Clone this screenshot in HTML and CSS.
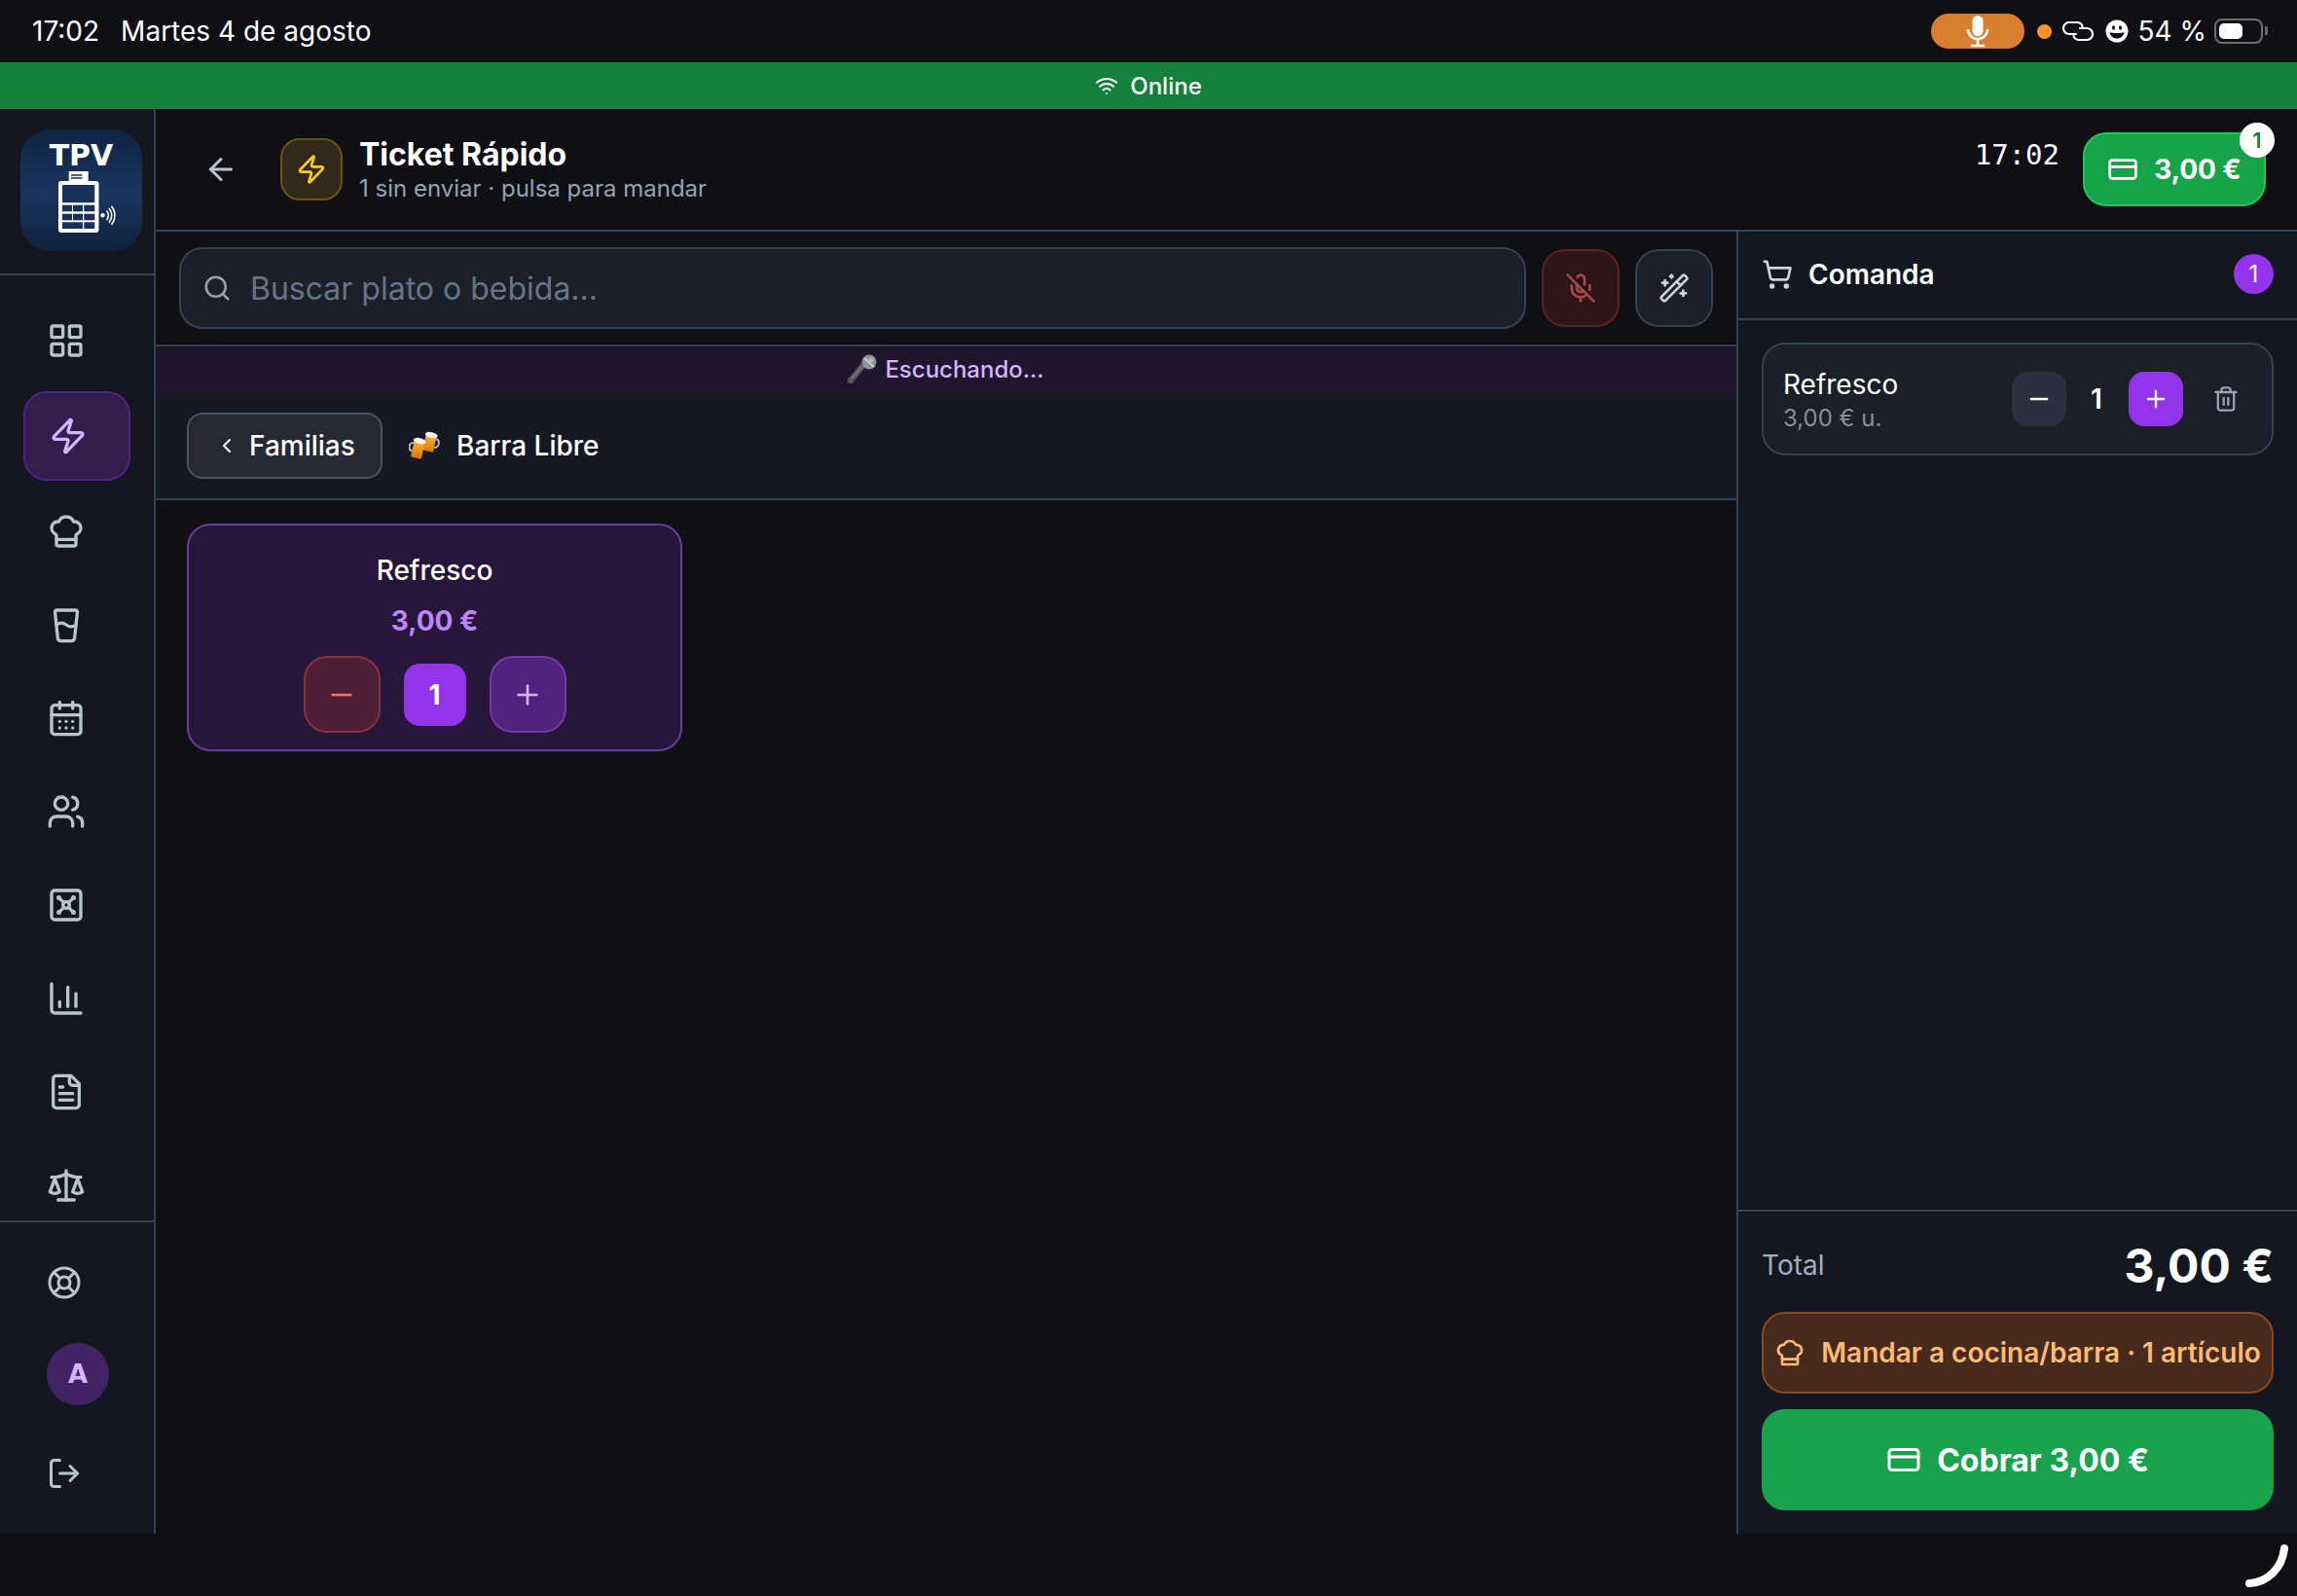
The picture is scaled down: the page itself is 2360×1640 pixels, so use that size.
FILE: index.html
```html
<!DOCTYPE html>
<html lang="es">
<head>
    <meta charset="UTF-8">
    <title>Ticket Rápido</title>
    <link rel="stylesheet" href="styles.css">
</head>
<body>

    <!-- icon sprite -->
    <svg class="sprite" xmlns="http://www.w3.org/2000/svg">
        <symbol id="i-grid" viewBox="0 0 24 24"><rect x="3" y="3" width="7" height="7" rx="1"/><rect x="14" y="3" width="7" height="7" rx="1"/><rect x="14" y="14" width="7" height="7" rx="1"/><rect x="3" y="14" width="7" height="7" rx="1"/></symbol>
        <symbol id="i-zap" viewBox="0 0 24 24"><path d="M4 14a1 1 0 0 1-.78-1.63l9.9-10.2a.5.5 0 0 1 .86.46l-1.92 6.02A1 1 0 0 0 13 10h7a1 1 0 0 1 .78 1.63l-9.9 10.2a.5.5 0 0 1-.86-.46l1.92-6.02A1 1 0 0 0 11 14z"/></symbol>
        <symbol id="i-chef" viewBox="0 0 24 24"><path d="M17 21a1 1 0 0 0 1-1v-5.35c0-.457.316-.844.727-1.041a4 4 0 0 0-2.134-7.589 5 5 0 0 0-9.186 0 4 4 0 0 0-2.134 7.588c.411.198.727.585.727 1.041V20a1 1 0 0 0 1 1Z"/><path d="M6 17h12"/></symbol>
        <symbol id="i-glass" viewBox="0 0 24 24"><path d="M5.116 4.104A1 1 0 0 1 6.11 3h11.78a1 1 0 0 1 .994 1.105L17.19 20.21A2 2 0 0 1 15.2 22H8.8a2 2 0 0 1-2-1.79z"/><path d="M6 12a5 5 0 0 1 6 0 5 5 0 0 0 6 0"/></symbol>
        <symbol id="i-calendar" viewBox="0 0 24 24"><path d="M8 2v4"/><path d="M16 2v4"/><rect x="3" y="4" width="18" height="18" rx="2"/><path d="M3 10h18"/><path d="M8 14h.01"/><path d="M12 14h.01"/><path d="M16 14h.01"/><path d="M8 18h.01"/><path d="M12 18h.01"/><path d="M16 18h.01"/></symbol>
        <symbol id="i-users" viewBox="0 0 24 24"><path d="M16 21v-2a4 4 0 0 0-4-4H6a4 4 0 0 0-4 4v2"/><circle cx="9" cy="7" r="4"/><path d="M22 21v-2a4 4 0 0 0-3-3.87"/><path d="M16 3.13a4 4 0 0 1 0 7.75"/></symbol>
        <symbol id="i-vault" viewBox="0 0 24 24"><rect x="3" y="3" width="18" height="18" rx="2"/><circle cx="7.5" cy="7.5" r=".5"/><path d="m7.9 7.9 2.7 2.7"/><circle cx="16.5" cy="7.5" r=".5"/><path d="m13.4 10.6 2.7-2.7"/><circle cx="7.5" cy="16.5" r=".5"/><path d="m7.9 16.1 2.7-2.7"/><circle cx="16.5" cy="16.5" r=".5"/><path d="m13.4 13.4 2.7 2.7"/><circle cx="12" cy="12" r="2"/></symbol>
        <symbol id="i-chart" viewBox="0 0 24 24"><path d="M3 3v16a2 2 0 0 0 2 2h16"/><path d="M18 17V9"/><path d="M13 17V5"/><path d="M8 17v-3"/></symbol>
        <symbol id="i-file" viewBox="0 0 24 24"><path d="M15 2H6a2 2 0 0 0-2 2v16a2 2 0 0 0 2 2h12a2 2 0 0 0 2-2V7Z"/><path d="M14 2v4a2 2 0 0 0 2 2h4"/><path d="M10 9H8"/><path d="M16 13H8"/><path d="M16 17H8"/></symbol>
        <symbol id="i-scale" viewBox="0 0 24 24"><path d="m16 16 3-8 3 8c-.87.65-1.92 1-3 1s-2.13-.35-3-1Z"/><path d="m2 16 3-8 3 8c-.87.65-1.92 1-3 1s-2.13-.35-3-1Z"/><path d="M7 21h10"/><path d="M12 3v18"/><path d="M3 7h2c2 0 5-1 7-2 2 1 5 2 7 2h2"/></symbol>
        <symbol id="i-buoy" viewBox="0 0 24 24"><circle cx="12" cy="12" r="10"/><path d="m4.93 4.93 4.24 4.24"/><path d="m14.83 9.17 4.24-4.24"/><path d="m14.83 14.83 4.24 4.24"/><path d="m9.17 14.83-4.24 4.24"/><circle cx="12" cy="12" r="4"/></symbol>
        <symbol id="i-logout" viewBox="0 0 24 24"><path d="M9 21H5a2 2 0 0 1-2-2V5a2 2 0 0 1 2-2h4"/><path d="m16 17 5-5-5-5"/><path d="M21 12H9"/></symbol>
        <symbol id="i-back" viewBox="0 0 24 24"><path d="m12 19-7-7 7-7"/><path d="M19 12H5"/></symbol>
        <symbol id="i-card" viewBox="0 0 24 24"><rect x="2" y="5" width="20" height="14" rx="2"/><path d="M2 10h20"/></symbol>
        <symbol id="i-search" viewBox="0 0 24 24"><path d="m21 21-4.34-4.34"/><circle cx="11" cy="11" r="8"/></symbol>
        <symbol id="i-micoff" viewBox="0 0 24 24"><path d="M12 19v3"/><path d="M15 9.34V5a3 3 0 0 0-5.68-1.33"/><path d="M16.95 16.95A7 7 0 0 1 5 12v-2"/><path d="M18.89 13.23A7 7 0 0 0 19 12v-2"/><path d="m2 2 20 20"/><path d="M9 9v3a3 3 0 0 0 5.12 2.12"/></symbol>
        <symbol id="i-wand" viewBox="0 0 24 24"><path d="m21.64 3.64-1.28-1.28a1.21 1.21 0 0 0-1.72 0L2.36 18.64a1.21 1.21 0 0 0 0 1.72l1.28 1.28a1.2 1.2 0 0 0 1.72 0L21.64 5.36a1.2 1.2 0 0 0 0-1.72"/><path d="m14 7 3 3"/><path d="M5 6v4"/><path d="M19 14v4"/><path d="M10 2v2"/><path d="M7 8H3"/><path d="M21 16h-4"/><path d="M11 3H9"/></symbol>
        <symbol id="i-cart" viewBox="0 0 24 24"><circle cx="8" cy="21" r="1"/><circle cx="19" cy="21" r="1"/><path d="M2.05 2.05h2l2.66 12.42a2 2 0 0 0 2 1.58h9.78a2 2 0 0 0 1.95-1.57l1.65-7.43H5.12"/></symbol>
        <symbol id="i-trash" viewBox="0 0 24 24"><path d="M3 6h18"/><path d="M19 6v14c0 1-1 2-2 2H7c-1 0-2-1-2-2V6"/><path d="M8 6V4c0-1 1-2 2-2h4c1 0 2 1 2 2v2"/><path d="M10 11v6"/><path d="M14 11v6"/></symbol>
        <symbol id="i-minus" viewBox="0 0 24 24"><path d="M5 12h14"/></symbol>
        <symbol id="i-plus" viewBox="0 0 24 24"><path d="M5 12h14"/><path d="M12 5v14"/></symbol>
        <symbol id="i-chevron" viewBox="0 0 24 24"><path d="m15 18-6-6 6-6"/></symbol>
        <symbol id="i-wifi" viewBox="0 0 24 24"><path d="M12 20h.01"/><path d="M2 8.82a15 15 0 0 1 20 0"/><path d="M5 12.859a10 10 0 0 1 14 0"/><path d="M8.5 16.429a5 5 0 0 1 7 0"/></symbol>
    </svg>

    <div class="statusbar">
        <div class="status-left">
            <span>17:02</span>
            <span>Martes 4 de agosto</span>
        </div>
        <div class="status-right">
            <div class="mic-pill">
                <svg width="24" height="34" viewBox="0 0 24 34">
                    <rect x="6.5" y="1" width="11" height="21" rx="5.5" fill="#fff"/>
                    <path d="M2 15a10 10 0 0 0 20 0M12 25v6M5 32h14" fill="none" stroke="#fff" stroke-width="2.6"/>
                </svg>
            </div>
            <span class="status-dot"></span>
            <svg class="status-link" width="32" height="20" viewBox="0 0 32 20" fill="none" stroke="#fff" stroke-width="2.2" stroke-linecap="round">
                <path d="M14 13H7A6 6 0 0 1 7 1h8a6 6 0 0 1 5.500 4"/>
                <path d="M18 7h7a6 6 0 0 1 0 12h-8a6 6 0 0 1-5.500-4"/>
            </svg>
            <svg class="status-smile" width="24" height="24" viewBox="0 0 24 24">
                <circle cx="12" cy="12" r="11.500" fill="#fff"/>
                <ellipse cx="8.500" cy="8.500" rx="1.500" ry="2.200" fill="#0f0f14"/>
                <ellipse cx="15.500" cy="8.500" rx="1.500" ry="2.200" fill="#0f0f14"/>
                <path d="M4.500 13c2 1.300 13 1.300 15 0-.6 4-3.500 6.500-7.500 6.500s-6.900-2.500-7.500-6.500z" fill="#0f0f14"/>
            </svg>
            <span>54 %</span>
            <div class="battery"><div class="battery-level"></div></div>
        </div>
    </div>

    <div class="online-bar">
        <svg class="icon online-icon"><use href="#i-wifi"/></svg>
        <span>Online</span>
    </div>

    <div class="app">
        <aside class="sidebar">
            <div class="sidebar-logo">
                <div class="logo">
                    <span class="logo-text">TPV</span>
                    <svg width="60" height="66" viewBox="0 0 60 66">
                        <rect x="11.700" y="1" width="20" height="13" fill="#fff"/>
                        <path d="M14 5h11.500M14 8h11.500" stroke="#19305a" stroke-width="1.600"/>
                        <rect x="1" y="11" width="41.500" height="53" rx="3" fill="#fff"/>
                        <g fill="#19305a">
                            <rect x="5" y="15" width="33.300" height="18.300" rx="1"/>
                            <rect x="5" y="35.700" width="10" height="6.600"/>
                            <rect x="16" y="35.700" width="10" height="6.600"/>
                            <rect x="27.300" y="35.700" width="11" height="6.600"/>
                            <rect x="5" y="44.700" width="10" height="6.600"/>
                            <rect x="16" y="44.700" width="10" height="6.600"/>
                            <rect x="27.300" y="44.700" width="11" height="6.600"/>
                            <rect x="5" y="53.300" width="21" height="6.700"/>
                            <rect x="27.300" y="53.300" width="11" height="6.700"/>
                        </g>
                        <circle cx="46.500" cy="46.300" r="2.200" fill="#fff"/>
                        <path d="M50.500 41.500a7 7 0 0 1 0 9.600M53 39a11 11 0 0 1 0 14.600M55.500 36.800a15 15 0 0 1 0 19" fill="none" stroke="#fff" stroke-width="1.600"/>
                    </svg>
                </div>
            </div>
            <nav class="sidebar-nav">
                <a class="nav-item"><svg class="icon"><use href="#i-grid"/></svg></a>
                <a class="nav-item active"><svg class="icon"><use href="#i-zap"/></svg></a>
                <a class="nav-item"><svg class="icon"><use href="#i-chef"/></svg></a>
                <a class="nav-item"><svg class="icon"><use href="#i-glass"/></svg></a>
                <a class="nav-item"><svg class="icon"><use href="#i-calendar"/></svg></a>
                <a class="nav-item"><svg class="icon"><use href="#i-users"/></svg></a>
                <a class="nav-item"><svg class="icon"><use href="#i-vault"/></svg></a>
                <a class="nav-item"><svg class="icon"><use href="#i-chart"/></svg></a>
                <a class="nav-item"><svg class="icon"><use href="#i-file"/></svg></a>
                <a class="nav-item"><svg class="icon"><use href="#i-scale"/></svg></a>
            </nav>
            <div class="sidebar-footer">
                <a class="foot-link"><svg class="icon"><use href="#i-buoy"/></svg></a>
                <div class="avatar">A</div>
                <a class="foot-link logout"><svg class="icon"><use href="#i-logout"/></svg></a>
            </div>
        </aside>

        <main class="content">
            <header class="topbar">
                <a class="back-link"><svg class="icon"><use href="#i-back"/></svg></a>
                <div class="title-icon"><svg class="icon"><use href="#i-zap"/></svg></div>
                <div class="title-block">
                    <h1>Ticket Rápido</h1>
                    <p>1 sin enviar · pulsa para mandar</p>
                </div>
                <span class="clock">17:02</span>
                <button class="total-btn">
                    <svg class="icon"><use href="#i-card"/></svg>
                    <span>3,00 €</span>
                    <span class="total-badge">1</span>
                </button>
            </header>

            <div class="workspace">
                <section class="catalog">
                    <div class="search-row">
                        <label class="search-box">
                            <svg class="icon"><use href="#i-search"/></svg>
                            <input type="text" placeholder="Buscar plato o bebida...">
                        </label>
                        <button class="square-btn mic-off"><svg class="icon"><use href="#i-micoff"/></svg></button>
                        <button class="square-btn"><svg class="icon"><use href="#i-wand"/></svg></button>
                    </div>

                    <div class="listening">
                        <svg width="30" height="30" viewBox="0 0 30 30">
                            <path d="M3 27 16 11" stroke="#55565a" stroke-width="6" stroke-linecap="round"/>
                            <path d="M4 25 15 12" stroke="#77787c" stroke-width="1.500"/>
                            <circle cx="22" cy="8" r="7.500" fill="#8f9196"/>
                            <path d="M17 4l10 9" stroke="#c9cbcf" stroke-width="2"/>
                            <circle cx="24" cy="6" r="2.500" fill="#b4b6ba"/>
                        </svg>
                        <span>Escuchando...</span>
                    </div>

                    <div class="family-bar">
                        <button class="family-back">
                            <svg class="icon"><use href="#i-chevron"/></svg>
                            <span>Familias</span>
                        </button>
                        <svg class="beers" width="32" height="30" viewBox="0 0 32 30">
                            <defs>
                                <linearGradient id="beer" x1="0" y1="0" x2="0" y2="1">
                                    <stop offset="0" stop-color="#f7b733"/>
                                    <stop offset="1" stop-color="#d9780a"/>
                                </linearGradient>
                            </defs>
                            <g transform="rotate(12 22 12)">
                                <path d="M27 7c5 0 5 8 0 9" fill="none" stroke="#b9bcc2" stroke-width="1.800"/>
                                <rect x="16" y="4" width="11" height="17" rx="1.500" fill="url(#beer)"/>
                                <ellipse cx="21.500" cy="4" rx="6.500" ry="3" fill="#f5f0e6"/>
                            </g>
                            <g transform="rotate(12 10 18)">
                                <path d="M4 13c-5 1-5 8 0 9" fill="none" stroke="#b9bcc2" stroke-width="1.800"/>
                                <rect x="4" y="10" width="11" height="18" rx="1.500" fill="url(#beer)"/>
                                <ellipse cx="9.500" cy="10" rx="6.500" ry="3" fill="#f8f4ea"/>
                            </g>
                        </svg>
                        <span class="family-name">Barra Libre</span>
                    </div>

                    <div class="products">
                        <div class="product">
                            <p class="product-name">Refresco</p>
                            <p class="product-price">3,00 €</p>
                            <div class="product-qty">
                                <button class="qty-btn minus"><svg class="icon"><use href="#i-minus"/></svg></button>
                                <span class="qty-value">1</span>
                                <button class="qty-btn plus"><svg class="icon"><use href="#i-plus"/></svg></button>
                            </div>
                        </div>
                    </div>
                </section>

                <aside class="order">
                    <div class="order-head">
                        <svg class="icon"><use href="#i-cart"/></svg>
                        <span class="order-title">Comanda</span>
                        <span class="order-count">1</span>
                    </div>
                    <div class="order-list">
                        <div class="order-item">
                            <div class="item-info">
                                <p class="item-name">Refresco</p>
                                <p class="item-price">3,00 € u.</p>
                            </div>
                            <button class="item-btn"><svg class="icon"><use href="#i-minus"/></svg></button>
                            <span class="item-qty">1</span>
                            <button class="item-btn add"><svg class="icon"><use href="#i-plus"/></svg></button>
                            <a class="item-trash"><svg class="icon"><use href="#i-trash"/></svg></a>
                        </div>
                    </div>
                    <div class="order-foot">
                        <div class="total-row">
                            <span class="total-label">Total</span>
                            <span class="total-value">3,00 €</span>
                        </div>
                        <button class="send-btn">
                            <svg class="icon"><use href="#i-chef"/></svg>
                            <span>Mandar a cocina/barra · 1 artículo</span>
                        </button>
                        <button class="pay-btn">
                            <svg class="icon"><use href="#i-card"/></svg>
                            <span>Cobrar 3,00 €</span>
                        </button>
                    </div>
                </aside>
            </div>
        </main>
    </div>

    <div class="bottom-bar">
        <svg width="48" height="50" viewBox="0 0 48 50">
            <path d="M41 8C39 28 24 43 5 44" fill="none" stroke="#fff" stroke-width="8" stroke-linecap="round"/>
        </svg>
    </div>

</body>
</html>
```

FILE: styles.css
```css
* {
    margin: 0;
    padding: 0;
    box-sizing: border-box;
    font-family: "Inter", "Liberation Sans", sans-serif;
}

body {
    width: 2360px;
    height: 1640px;
    background-color: #0f0f14;
    color: white;
    display: flex;
    flex-direction: column;
    overflow: hidden;
}

button {
    border: none;
    color: inherit;
    cursor: pointer;
}

.sprite {
    display: none;
}

.icon {
    display: block;
    width: 40px;
    height: 40px;
    fill: none;
    stroke: currentColor;
    stroke-width: 2;
    stroke-linecap: round;
    stroke-linejoin: round;
    flex-shrink: 0;
}

/* status bar */
.statusbar {
    height: 64px;
    display: flex;
    justify-content: space-between;
    align-items: center;
    padding: 0 35px 0 33px;
    font-size: 28px;
    flex-shrink: 0;
}

.status-left {
    display: flex;
    gap: 22px;
}

.status-right {
    display: flex;
    align-items: center;
}

.mic-pill {
    width: 96px;
    height: 36px;
    border-radius: 18px;
    background: #d97f2f;
    display: flex;
    justify-content: center;
    align-items: center;
    margin-right: 13px;
}

.status-dot {
    width: 15px;
    height: 15px;
    border-radius: 50%;
    background: #ff9228;
    margin-right: 11px;
}

.status-link {
    margin-right: 12px;
}

.status-smile {
    margin-right: 10px;
}

.battery {
    position: relative;
    width: 50px;
    height: 26px;
    border: 2px solid #6b6b70;
    border-radius: 8px;
    padding: 3px;
    margin-left: 8px;
}

.battery::after {
    content: "";
    position: absolute;
    right: -7px;
    top: 6px;
    width: 3px;
    height: 9px;
    background: #6b6b70;
    border-radius: 0 2px 2px 0;
}

.battery-level {
    width: 24px;
    height: 100%;
    background: white;
    border-radius: 5px;
}

/* online bar */
.online-bar {
    height: 48px;
    background: #15803d;
    display: flex;
    justify-content: center;
    align-items: center;
    gap: 12px;
    font-size: 24px;
    font-weight: 500;
    flex-shrink: 0;
}

.online-bar .online-icon {
    width: 24px;
    height: 24px;
}

.app {
    height: 1464px;
    display: flex;
    flex-shrink: 0;
}

/* sidebar */
.sidebar {
    width: 160px;
    background: #151720;
    border-right: 2px solid #334155;
    display: flex;
    flex-direction: column;
    flex-shrink: 0;
}

.sidebar-logo {
    height: 171px;
    padding: 21px 0 0 21px;
    border-bottom: 2px solid #334155;
    flex-shrink: 0;
}

.logo {
    width: 125px;
    height: 125px;
    border-radius: 30px;
    background: linear-gradient(180deg, #0f2444 0%, #1a3560 55%, #10203c 100%);
    display: flex;
    flex-direction: column;
    align-items: center;
    padding-top: 10px;
}

.logo-text {
    font-family: "DejaVu Sans", sans-serif;
    font-size: 30px;
    font-weight: 700;
    line-height: 33px;
}

.logo svg {
    margin: -1px 0 0 11px;
}

.sidebar-nav {
    flex: 1;
    min-height: 0;
    overflow: hidden;
    padding: 23px 24px 0;
    display: flex;
    flex-direction: column;
    gap: 8px;
}

.nav-item {
    height: 88px;
    padding: 24px;
    color: #b8c4d2;
    flex-shrink: 0;
}

.nav-item.active {
    height: 92px;
    border: 2px solid #4f2385;
    border-radius: 24px;
    background: #321d4d;
    color: #d8b4fe;
}

.sidebar-footer {
    height: 322px;
    border-top: 2px solid #334155;
    padding: 44px 0 0 48px;
    flex-shrink: 0;
}

.foot-link {
    display: block;
    color: #b8c4d2;
}

.foot-link .icon {
    width: 36px;
    height: 36px;
}

.avatar {
    width: 64px;
    height: 64px;
    border-radius: 50%;
    background: #412264;
    color: #d8b4fe;
    font-family: "DejaVu Sans", sans-serif;
    font-size: 26px;
    font-weight: 700;
    display: flex;
    justify-content: center;
    align-items: center;
    margin: 44px 0 52px;
}

/* main */
.content {
    flex: 1;
    min-width: 0;
    display: flex;
    flex-direction: column;
}

.topbar {
    height: 126px;
    border-bottom: 2px solid #334155;
    display: flex;
    align-items: center;
    padding: 0 32px 0 49px;
    flex-shrink: 0;
}

.back-link {
    color: #b8c4d2;
    margin-right: 43px;
}

.back-link .icon {
    width: 36px;
    height: 36px;
}

.title-icon {
    width: 64px;
    height: 64px;
    border-radius: 20px;
    background: #33291a;
    border: 2px solid #6b5314;
    color: #facc15;
    display: flex;
    justify-content: center;
    align-items: center;
    margin-right: 17px;
}

.title-icon .icon {
    width: 32px;
    height: 32px;
}

.title-block {
    flex: 1;
    padding-top: 2px;
}

.title-block h1 {
    font-size: 32px;
    font-weight: 700;
    line-height: 38px;
}

.title-block p {
    font-size: 24px;
    color: #94a3b8;
    line-height: 32px;
}

.clock {
    font-family: "DejaVu Sans Mono", monospace;
    font-size: 29px;
    margin: 0 24px 30px 0;
}

.total-btn {
    position: relative;
    width: 188px;
    height: 76px;
    border-radius: 24px;
    background: #16a34a;
    border: 2px solid #22c55e;
    display: flex;
    align-items: center;
    justify-content: center;
    gap: 16px;
    font-size: 28px;
    font-weight: 700;
}

.total-btn .icon {
    width: 32px;
    height: 32px;
}

.total-badge {
    position: absolute;
    top: -12px;
    right: -11px;
    width: 36px;
    height: 36px;
    border-radius: 50%;
    background: white;
    color: #15803d;
    font-size: 22px;
    font-weight: 600;
    display: flex;
    justify-content: center;
    align-items: center;
}

.workspace {
    flex: 1;
    min-height: 0;
    display: flex;
}

.catalog {
    flex: 1;
    min-width: 0;
    display: flex;
    flex-direction: column;
}

.search-row {
    height: 118px;
    border-bottom: 2px solid #334155;
    padding: 16px 24px 0;
    display: flex;
    align-items: flex-start;
    gap: 16px;
    flex-shrink: 0;
}

.search-box {
    flex: 1;
    height: 84px;
    border-radius: 24px;
    background: #1c1e28;
    border: 2px solid #334155;
    display: flex;
    align-items: center;
    gap: 19px;
    padding-left: 22px;
    color: #94a3b8;
}

.search-box .icon {
    width: 30px;
    height: 30px;
}

.search-box input {
    flex: 1;
    background: none;
    border: none;
    outline: none;
    font-size: 32px;
    color: white;
}

.search-box input::placeholder {
    color: #64748b;
    opacity: 1;
}

.square-btn {
    width: 80px;
    height: 80px;
    margin-top: 2px;
    border-radius: 24px;
    background: #1c1e28;
    border: 2px solid #334155;
    color: #cbd5e1;
    display: flex;
    justify-content: center;
    align-items: center;
}

.square-btn .icon {
    width: 32px;
    height: 32px;
}

.square-btn.mic-off {
    background: #2c1519;
    border-color: #5a2226;
    color: #a8484a;
}

.listening {
    height: 48px;
    padding-bottom: 2px;
    background: #1f162e;
    color: #d8b4fe;
    font-size: 24px;
    font-weight: 500;
    display: flex;
    justify-content: center;
    align-items: center;
    gap: 8px;
    flex-shrink: 0;
}

.family-bar {
    height: 110px;
    background: #161824;
    border-bottom: 2px solid #334155;
    display: flex;
    align-items: center;
    padding: 0 32px;
    flex-shrink: 0;
}

.family-back {
    width: 201px;
    height: 68px;
    border-radius: 16px;
    background: #262833;
    border: 2px solid #475569;
    display: flex;
    align-items: center;
    padding-left: 30px;
    gap: 11px;
    font-size: 28px;
    font-weight: 500;
}

.family-back .icon {
    width: 24px;
    height: 24px;
    margin-left: -3px;
}

.beers {
    margin: 0 17px 0 27px;
}

.family-name {
    font-size: 28px;
    font-weight: 500;
}

.products {
    padding: 24px 32px;
}

.product {
    width: 509px;
    height: 234px;
    border-radius: 24px;
    background: #26163a;
    border: 2px solid #6b3a9e;
    display: flex;
    flex-direction: column;
    align-items: center;
    padding-top: 28px;
}

.product-name {
    font-size: 28px;
    font-weight: 500;
    line-height: 36px;
}

.product-price {
    font-size: 28px;
    font-weight: 700;
    color: #c084fc;
    line-height: 36px;
    margin-top: 16px;
}

.product-qty {
    display: flex;
    align-items: center;
    gap: 24px;
    margin-top: 18px;
}

.qty-btn {
    width: 79px;
    height: 79px;
    border-radius: 24px;
    border: 2px solid;
    display: flex;
    justify-content: center;
    align-items: center;
}

.qty-btn .icon {
    width: 32px;
    height: 32px;
}

.qty-btn.minus {
    background: #4e2035;
    border-color: #8a3040;
    color: #f87171;
}

.qty-btn.plus {
    background: #50237e;
    border-color: #7438ab;
    color: #d8b4fe;
}

.qty-value {
    width: 64px;
    height: 64px;
    border-radius: 16px;
    background: #9333ea;
    font-size: 28px;
    font-weight: 700;
    display: flex;
    justify-content: center;
    align-items: center;
}

/* order panel */
.order {
    width: 576px;
    background: #151720;
    border-left: 2px solid #334155;
    display: flex;
    flex-direction: column;
    flex-shrink: 0;
}

.order-head {
    height: 91px;
    border-bottom: 2px solid #334155;
    display: flex;
    align-items: center;
    padding: 0 24px 2px;
    flex-shrink: 0;
}

.order-head .icon {
    width: 32px;
    height: 32px;
    color: #cbd5e1;
}

.order-title {
    flex: 1;
    font-size: 28px;
    font-weight: 600;
    margin-left: 16px;
}

.order-count {
    width: 41px;
    height: 41px;
    border-radius: 50%;
    background: #9333ea;
    font-size: 24px;
    display: flex;
    justify-content: center;
    align-items: center;
}

.order-list {
    flex: 1;
    padding: 23px 24px;
}

.order-item {
    height: 116px;
    border-radius: 24px;
    background: #1c1e28;
    border: 2px solid #334155;
    display: flex;
    align-items: center;
    padding-left: 20px;
}

.item-info {
    flex: 1;
    margin-top: 2px;
}

.item-name {
    font-size: 28px;
    line-height: 38px;
}

.item-price {
    font-size: 24px;
    line-height: 32px;
    color: #84909f;
}

.item-btn {
    width: 56px;
    height: 56px;
    border-radius: 16px;
    background: #2d2f40;
    display: flex;
    justify-content: center;
    align-items: center;
}

.item-btn.add {
    background: #9333ea;
}

.item-btn .icon {
    width: 28px;
    height: 28px;
}

.item-qty {
    width: 64px;
    padding-right: 2px;
    text-align: center;
    font-size: 28px;
    font-weight: 600;
}

.item-trash {
    color: #94a3b8;
    margin: 0 33px 0 30px;
}

.item-trash .icon {
    width: 28px;
    height: 28px;
}

.order-foot {
    height: 333px;
    border-top: 2px solid #334155;
    padding: 24px 24px 0;
    flex-shrink: 0;
}

.total-row {
    height: 62px;
    display: flex;
    justify-content: space-between;
    align-items: center;
    margin-bottom: 17px;
}

.total-label {
    font-size: 28px;
    color: #a0aec0;
}

.total-value {
    font-size: 48px;
    font-weight: 700;
}

.send-btn {
    width: 100%;
    height: 84px;
    border-radius: 24px;
    background: #472a1e;
    border: 2px solid #8a4a1e;
    color: #fdba74;
    display: flex;
    justify-content: center;
    align-items: center;
    gap: 16px;
    font-size: 28px;
    font-weight: 600;
}

.send-btn .icon {
    width: 32px;
    height: 32px;
}

.pay-btn {
    width: 100%;
    height: 104px;
    margin-top: 16px;
    border-radius: 24px;
    background: #18a34c;
    display: flex;
    justify-content: center;
    align-items: center;
    gap: 16px;
    font-size: 32px;
    font-weight: 700;
}

.pay-btn .icon {
    width: 36px;
    height: 36px;
}

.bottom-bar {
    flex: 1;
    display: flex;
    justify-content: flex-end;
    align-items: center;
    padding-right: 6px;
}
```
